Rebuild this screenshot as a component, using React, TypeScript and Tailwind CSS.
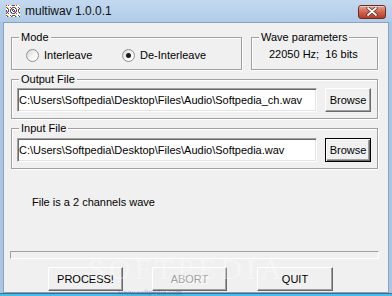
import React from 'react';

// classic win32 look: etched group boxes, 3D buttons, sunken edit fields
const uiFont = { fontFamily: '"Liberation Sans", Arial, sans-serif' };

const ICON_COLORS = ['#e02020', '#2040e0', '#20a020', '#e0c000', '#ffffff', '#ffffff', '#c020c0', '#ffffff'];

function AppIcon() {
  // noisy little multicolour icon from the title bar
  const cells = [];
  for (let y = 0; y < 12; y++) {
    for (let x = 0; x < 14; x++) {
      const c = ICON_COLORS[(x * 7 + y * 13 + x * y) % ICON_COLORS.length];
      cells.push(<rect key={`${x}-${y}`} x={1 + x} y={2 + y} width={1} height={1} fill={c} />);
    }
  }
  return (
    <svg width="16" height="16" viewBox="0 0 16 16" className="shrink-0">
      {cells}
    </svg>
  );
}

function CloseButton() {
  return (
    <div className="flex h-[14px] w-[28px] items-center justify-center rounded-[3px] border border-[#6b2c22] bg-gradient-to-b from-[#e4a08f] via-[#cf6650] to-[#b43b25] shadow-[inset_0_1px_0_rgba(255,255,255,0.5)]">
      <svg width="12" height="9" viewBox="0 0 12 9">
        <path d="M2 1 L10 8 M10 1 L2 8" stroke="#5a2018" strokeWidth="3.2" strokeLinecap="round" />
        <path d="M2 1 L10 8 M10 1 L2 8" stroke="#ffffff" strokeWidth="1.8" strokeLinecap="round" />
      </svg>
    </div>
  );
}

function Radio({ checked, label, className = '' }: { checked?: boolean; label: string; className?: string }) {
  return (
    <div className={`flex items-center gap-[5px] ${className}`}>
      <div className="flex h-[13px] w-[13px] items-center justify-center rounded-full border border-[#8e8f8f] bg-gradient-to-br from-[#d4d4d4] via-[#f4f4f4] to-[#ffffff]">
        {checked && <div className="h-[5px] w-[5px] rounded-full bg-[#1a1a1a]" />}
      </div>
      <span className="text-[11px] leading-[14px] text-black">{label}</span>
    </div>
  );
}

function GroupBox({ title, className = '', children }: { title: string; className?: string; children?: React.ReactNode }) {
  return (
    <fieldset className={`border border-[#a0a0a0] shadow-[inset_1px_1px_0_#ffffff,1px_1px_0_#ffffff] ${className}`}>
      <legend className="ml-[7px] bg-[#f0f0f0] px-[2px] text-[11px] leading-[14px] text-black">{title}</legend>
      {children}
    </fieldset>
  );
}

function EditField({ value }: { value: string }) {
  return (
    <div className="flex h-[24px] w-[300px] shrink-0 items-center overflow-hidden whitespace-nowrap border border-t-[#a0a0a0] border-l-[#a0a0a0] border-r-white border-b-white bg-white pl-[1px] text-[11px] text-black shadow-[inset_1px_1px_0_#696969,inset_-1px_-1px_0_#e3e3e3]">
      {value}
    </div>
  );
}

function Button({ label, isDefault, disabled, className = '' }: { label: string; isDefault?: boolean; disabled?: boolean; className?: string }) {
  const edge = isDefault
    ? 'border border-black shadow-[inset_1px_1px_0_#ffffff,inset_-1px_-1px_0_#696969,inset_-2px_-2px_0_#a0a0a0]'
    : 'border border-t-white border-l-white border-r-[#696969] border-b-[#696969] shadow-[inset_-1px_-1px_0_#a0a0a0]';
  return (
    <div className={`flex shrink-0 items-center justify-center bg-[#f0f0f0] text-[11px] ${edge} ${className}`}>
      <span className={disabled ? 'text-[#a0a0a0] [text-shadow:1px_1px_0_#ffffff]' : 'text-black'}>{label}</span>
    </div>
  );
}

export default function App() {
  return (
    <div className="relative flex h-[296px] w-[392px] flex-col overflow-hidden bg-[#aac6e5]">
      {/* title bar */}
      <div className="flex h-[22px] shrink-0 items-center bg-gradient-to-b from-[#c3d9ef] to-[#b0cbe8] pl-[5px] pr-[6px]">
        <AppIcon />
        <span className="ml-[4px] text-[12px] text-[#111111]" style={{ fontFamily: '"Liberation Sans", Arial, sans-serif' }}>
          multiwav 1.0.0.1
        </span>
        <div className="ml-auto pt-[1px]">
          <CloseButton />
        </div>
      </div>

      {/* client area */}
      <div
        className="mx-[3px] flex h-[271px] flex-col border border-[#8aa2bd] bg-[#f0f0f0] pl-[7px] pt-[7px]"
        style={uiFont}
      >
        <div className="flex gap-[9px]">
          <GroupBox title="Mode" className="h-[40px] w-[231px]">
            <div className="mt-[4px] flex">
              <Radio label="Interleave" className="ml-[14px] w-[96px]" />
              <Radio label="De-Interleave" checked />
            </div>
          </GroupBox>
          <GroupBox title="Wave parameters" className="h-[40px] w-[127px]">
            <div className="mt-[3px] whitespace-pre pl-[17px] text-[11px] leading-[14px] text-black">22050 Hz;  16 bits</div>
          </GroupBox>
        </div>

        <GroupBox title="Output File" className="mt-[2px] h-[47px] w-[367px]">
          <div className="ml-[5px] mt-[2px] flex gap-[8px]">
            <EditField value={'C:\\Users\\Softpedia\\Desktop\\Files\\Audio\\Softpedia_ch.wav'} />
            <Button label="Browse" className="h-[24px] w-[46px]" />
          </div>
        </GroupBox>

        <GroupBox title="Input File" className="mt-[2px] h-[48px] w-[367px]">
          <div className="ml-[5px] mt-[3px] flex gap-[8px]">
            <EditField value={'C:\\Users\\Softpedia\\Desktop\\Files\\Audio\\Softpedia.wav'} />
            <Button label="Browse" isDefault className="h-[24px] w-[46px]" />
          </div>
        </GroupBox>

        <div className="ml-[21px] mt-[25px] text-[11px] leading-[16px] text-black">File is a 2 channels wave</div>

        {/* progress bar */}
        <div className="-ml-[1px] mt-[41px] h-[8px] w-[369px] border border-t-[#a0a0a0] border-l-[#a0a0a0] border-r-white border-b-white" />

        <div className="mt-[8px] flex">
          <Button label="PROCESS!" className="ml-[37px] h-[24px] w-[75px]" />
          <Button label="ABORT" disabled className="ml-[29px] h-[24px] w-[75px]" />
          <Button label="QUIT" className="ml-[30px] h-[24px] w-[76px]" />
        </div>
      </div>

      {/* bottom frame edge */}
      <div className="mt-auto h-[1px] bg-[#43698f]" />
      <div className="h-[2px] bg-[#49bde9]" />

      {/* faint watermark lying over the buttons */}
      <div className="pointer-events-none absolute left-[88px] top-[254px] select-none text-[30px] leading-[30px] tracking-[4px] text-white/35" style={{ fontFamily: '"Liberation Serif", serif' }}>
        SOFTPEDIA
      </div>
      <div className="pointer-events-none absolute left-[118px] top-[289px] select-none text-[8px] leading-[8px] text-[#2a5b8f]/40" style={{ fontFamily: '"Liberation Serif", serif' }}>
        www.softpedia.com
      </div>
    </div>
  );
}
